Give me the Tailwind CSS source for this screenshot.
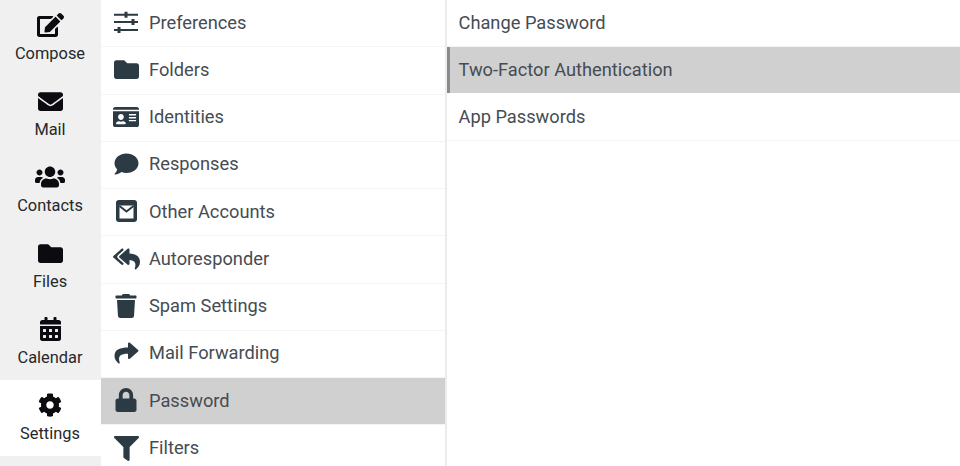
<!DOCTYPE html>
<html lang="en">
<head>
  <meta charset="UTF-8">
  <title>Settings</title>
  <script src="https://cdn.jsdelivr.net/npm/@tailwindcss/browser@4"></script>
</head>
<body class="bg-white h-[466px] overflow-hidden font-['Roboto',sans-serif]">
  <div class="flex h-[466px] overflow-hidden">

    <!-- App nav -->
    <nav class="w-[101px] shrink-0 bg-[#f0f0f0] text-[16.4px] text-[#26282b]">
      <a class="h-[76px] flex flex-col items-center pr-[1px]">
        <svg class="h-[24px] mt-[13px] fill-[#0b0b10]" viewBox="0 0 576 512"><path d="M402.6 83.2l90.2 90.2c3.8 3.8 3.8 10 0 13.8L274.4 405.6l-92.8 10.3c-12.4 1.4-22.9-9.1-21.5-21.5l10.3-92.8L388.8 83.2c3.8-3.8 10-3.8 13.8 0zm162-22.9l-48.8-48.8c-15.2-15.2-39.9-15.2-55.2 0l-35.4 35.4c-3.8 3.8-3.8 10 0 13.8l90.2 90.2c3.8 3.8 10 3.8 13.8 0l35.4-35.4c15.2-15.3 15.2-40 0-55.2zM384 346.2V448H64V128h229.8c3.2 0 6.2-1.3 8.5-3.5l40-40c7.6-7.6 2.2-20.5-8.5-20.5H48C21.5 64 0 85.5 0 112v352c0 26.5 21.5 48 48 48h352c26.5 0 48-21.5 48-48V306.2c0-10.7-12.9-16-20.5-8.5l-40 40c-2.2 2.3-3.5 5.3-3.5 8.5z"/></svg>
        <span class="mt-[5px] leading-[24px]">Compose</span>
      </a>
      <a class="h-[76px] flex flex-col items-center pr-[1px]">
        <svg class="h-[25px] mt-[13px] fill-[#0b0b10]" viewBox="0 0 512 512"><path d="M502.3 190.8c3.9-3.1 9.7-.2 9.7 4.7V400c0 26.5-21.5 48-48 48H48c-26.5 0-48-21.5-48-48V195.6c0-5 5.7-7.8 9.7-4.7 22.4 17.4 52.1 39.5 154.1 113.6 21.1 15.4 56.7 47.8 92.2 47.6 35.7.3 72-32.8 92.3-47.6 102-74.1 131.6-96.3 154-113.7zM256 320c23.2.4 56.6-29.2 73.4-41.4 132.7-96.3 142.8-104.7 173.4-128.7 5.8-4.5 9.2-11.5 9.2-18.9v-19c0-26.5-21.5-48-48-48H48C21.5 64 0 85.5 0 112v19c0 7.4 3.4 14.3 9.2 18.9 30.6 23.9 40.7 32.4 173.4 128.7 16.8 12.2 50.2 41.8 73.4 41.4z"/></svg>
        <span class="mt-[4px] leading-[24px]">Mail</span>
      </a>
      <a class="h-[76px] flex flex-col items-center pr-[1px]">
        <svg class="h-[24px] mt-[13px] fill-[#0b0b10]" viewBox="0 0 640 512"><path d="M96 224c35.3 0 64-28.7 64-64s-28.7-64-64-64-64 28.7-64 64 28.7 64 64 64zm448 0c35.3 0 64-28.7 64-64s-28.7-64-64-64-64 28.7-64 64 28.7 64 64 64zm32 32h-64c-17.6 0-33.5 7.1-45.1 18.6 40.3 22.1 68.9 62 75.1 109.4h66c17.7 0 32-14.3 32-32v-32c0-35.3-28.7-64-64-64zm-256 0c61.9 0 112-50.1 112-112S381.9 32 320 32 208 82.1 208 144s50.1 112 112 112zm76.8 32h-8.3c-20.8 10-43.9 16-68.5 16s-47.6-6-68.5-16h-8.3C179.6 288 128 339.6 128 403.2V432c0 26.5 21.5 48 48 48h288c26.5 0 48-21.5 48-48v-28.8c0-63.6-51.6-115.2-115.2-115.2zm-223.7-13.4C161.5 263.1 145.6 256 128 256H64c-35.3 0-64 28.7-64 64v32c0 17.7 14.3 32 32 32h65.9c6.3-47.4 34.9-87.3 75.2-109.4z"/></svg>
        <span class="mt-[5px] leading-[24px]">Contacts</span>
      </a>
      <a class="h-[76px] flex flex-col items-center pr-[1px]">
        <svg class="h-[25px] mt-[13px] fill-[#0b0b10]" viewBox="0 0 512 512"><path d="M464 128H272l-64-64H48C21.49 64 0 85.49 0 112v288c0 26.51 21.49 48 48 48h416c26.51 0 48-21.49 48-48V176c0-26.51-21.49-48-48-48z"/></svg>
        <span class="mt-[4px] leading-[24px]">Files</span>
      </a>
      <a class="h-[76px] flex flex-col items-center pr-[1px]">
        <svg class="h-[24px] mt-[13px] fill-[#0b0b10]" viewBox="0 0 448 512"><path d="M0 464c0 26.5 21.5 48 48 48h352c26.5 0 48-21.5 48-48V192H0v272zm320-196c0-6.6 5.4-12 12-12h40c6.6 0 12 5.4 12 12v40c0 6.6-5.4 12-12 12h-40c-6.6 0-12-5.4-12-12v-40zm0 128c0-6.6 5.4-12 12-12h40c6.6 0 12 5.4 12 12v40c0 6.6-5.4 12-12 12h-40c-6.6 0-12-5.4-12-12v-40zM192 268c0-6.6 5.4-12 12-12h40c6.6 0 12 5.4 12 12v40c0 6.6-5.4 12-12 12h-40c-6.6 0-12-5.4-12-12v-40zm0 128c0-6.6 5.4-12 12-12h40c6.6 0 12 5.4 12 12v40c0 6.6-5.4 12-12 12h-40c-6.6 0-12-5.4-12-12v-40zM64 268c0-6.6 5.4-12 12-12h40c6.6 0 12 5.4 12 12v40c0 6.6-5.4 12-12 12H76c-6.6 0-12-5.4-12-12v-40zm0 128c0-6.6 5.4-12 12-12h40c6.6 0 12 5.4 12 12v40c0 6.6-5.4 12-12 12H76c-6.6 0-12-5.4-12-12v-40zM400 64h-48V16c0-8.8-7.2-16-16-16h-32c-8.8 0-16 7.2-16 16v48H160V16c0-8.8-7.2-16-16-16h-32c-8.8 0-16 7.2-16 16v48H48C21.5 64 0 85.5 0 112v48h448v-48c0-26.5-21.5-48-48-48z"/></svg>
        <span class="mt-[5px] leading-[24px]">Calendar</span>
      </a>
      <a class="h-[76px] flex flex-col items-center pr-[1px] bg-white">
        <svg class="h-[24px] mt-[13px] fill-[#0b0b10]" viewBox="0 0 512 512"><path d="M487.4 315.7l-42.6-24.6c4.3-23.2 4.3-47 0-70.2l42.6-24.6c4.9-2.8 7.1-8.6 5.5-14-11.1-35.6-30-67.8-54.7-94.6-3.8-4.1-10-5.1-14.8-2.3L380.8 110c-17.9-15.4-38.5-27.3-60.8-35.1V25.8c0-5.6-3.9-10.5-9.4-11.7-36.7-8.2-74.3-7.8-109.2 0-5.5 1.2-9.4 6.1-9.4 11.7V75c-22.2 7.9-42.8 19.8-60.8 35.1L88.7 85.5c-4.9-2.8-11-1.9-14.8 2.3-24.7 26.7-43.6 58.9-54.7 94.6-1.7 5.4.6 11.2 5.5 14L67.3 221c-4.3 23.2-4.3 47 0 70.2l-42.6 24.6c-4.9 2.8-7.1 8.6-5.5 14 11.1 35.6 30 67.8 54.7 94.6 3.8 4.1 10 5.1 14.8 2.3l42.6-24.6c17.9 15.4 38.5 27.3 60.8 35.1v49.2c0 5.6 3.9 10.5 9.4 11.7 36.7 8.2 74.3 7.8 109.2 0 5.5-1.2 9.4-6.1 9.4-11.7v-49.2c22.2-7.9 42.8-19.8 60.8-35.1l42.6 24.6c4.9 2.8 11 1.9 14.8-2.3 24.7-26.7 43.6-58.9 54.7-94.6 1.5-5.5-.7-11.3-5.6-14.1zM256 336c-44.1 0-80-35.9-80-80s35.9-80 80-80 80 35.9 80 80-35.9 80-80 80z"/></svg>
        <span class="mt-[5px] leading-[24px]">Settings</span>
      </a>
    </nav>

    <!-- Settings sections -->
    <div class="w-[346px] shrink-0 border-r-2 border-[#e8edf0] text-[18.25px] text-[#454c53]">
      <a class="h-[47.25px] flex items-center border-b border-[#f4f4f4] pb-[1.5px] pl-[12px]">
        <svg class="w-[26px] h-[24px] mr-[10px] fill-[#2c3a44]" viewBox="0 0 26 24"><path d="M1 3.700h24v2H1zM1 11h24v2H1zM1 19h24v2H1zM11.500 1.700h3v6h-3zM18.500 9h3v6h-3zM4.500 17h3v6h-3z"/></svg>
        <span>Preferences</span>
      </a>
      <a class="h-[47.25px] flex items-center border-b border-[#f4f4f4] pb-[1.5px] pl-[13px]">
        <svg class="w-[25px] h-[25px] mr-[10px] fill-[#2c3a44]" viewBox="0 0 512 512"><path d="M464 128H272l-64-64H48C21.49 64 0 85.49 0 112v288c0 26.51 21.49 48 48 48h416c26.51 0 48-21.49 48-48V176c0-26.51-21.49-48-48-48z"/></svg>
        <span>Folders</span>
      </a>
      <a class="h-[47.25px] flex items-center border-b border-[#f4f4f4] pb-[1.5px] pl-[12px]">
        <svg class="w-[26px] h-[24px] mr-[10px] fill-[#2c3a44]" viewBox="0 0 576 512"><path d="M528 32H48C21.5 32 0 53.5 0 80v16h576V80c0-26.5-21.5-48-48-48zM0 432c0 26.5 21.5 48 48 48h480c26.5 0 48-21.5 48-48V128H0v304zm352-232c0-4.4 3.6-8 8-8h144c4.4 0 8 3.6 8 8v16c0 4.4-3.6 8-8 8H360c-4.4 0-8-3.6-8-8v-16zm0 64c0-4.4 3.6-8 8-8h144c4.4 0 8 3.6 8 8v16c0 4.4-3.6 8-8 8H360c-4.4 0-8-3.6-8-8v-16zm0 64c0-4.4 3.6-8 8-8h144c4.4 0 8 3.6 8 8v16c0 4.4-3.6 8-8 8H360c-4.4 0-8-3.6-8-8v-16zM176 192c35.3 0 64 28.7 64 64s-28.7 64-64 64-64-28.7-64-64 28.7-64 64-64zM67.1 396.2C75.5 370.5 99.6 352 128 352h8.2c12.3 5.1 25.7 8 39.8 8s27.6-2.9 39.8-8h8.2c28.4 0 52.5 18.5 60.9 44.2 3.2 9.9-5.2 19.8-15.6 19.8H82.7c-10.4 0-18.8-10-15.6-19.8z"/></svg>
        <span>Identities</span>
      </a>
      <a class="h-[47.25px] flex items-center border-b border-[#f4f4f4] pb-[1.5px] pl-[13px]">
        <svg class="w-[25px] h-[24px] mr-[10px] fill-[#2c3a44]" viewBox="0 0 512 512"><path d="M256 32C114.6 32 0 125.1 0 240c0 49.6 21.4 95 57 130.7C44.5 421.1 2.7 466 2.2 466.5c-2.2 2.3-2.8 5.7-1.5 8.7S4.8 480 8 480c66.3 0 116-31.8 140.6-51.4 32.7 12.3 69 19.4 107.4 19.400 141.400 0 256-93.100 256-208S397.400 32 256 32z"/></svg>
        <span>Responses</span>
      </a>
      <a class="h-[47.25px] flex items-center border-b border-[#f4f4f4] pb-[1.5px] pl-[12px]">
        <svg class="w-[26px] h-[22px] mr-[10px]" viewBox="0 0 26 22"><rect x="3" y="0" width="21" height="22" rx="3" fill="#2c3a44"/><rect x="6.500" y="5.500" width="14" height="13" fill="#fff"/><path d="M6.500 6l7 5.500 7-5.500" fill="none" stroke="#2c3a44" stroke-width="1.800"/></svg>
        <span>Other Accounts</span>
      </a>
      <a class="h-[47.25px] flex items-center border-b border-[#f4f4f4] pb-[1.5px] pl-[12px]">
        <svg class="w-[27px] h-[24px] mr-[9px] fill-[#2c3a44]" viewBox="0 0 576 512"><path d="M136.309 189.836L312.313 37.851C327.72 24.546 352 35.348 352 56.015v82.763c129.182 10.231 224 52.212 224 183.548 0 61.441-39.582 122.309-83.333 154.132-13.653 9.931-33.111-2.533-28.077-18.631 38.512-123.162-3.922-169.482-112.59-182.015v84.175c0 20.701-24.3 31.453-39.687 18.164L136.309 226.164c-11.071-9.561-11.086-26.753 0-36.328zm-128 36.328L184.313 378.15C199.7 391.439 224 380.636 224 359.985v-15.683l-108.606-93.804a55.96 55.96 0 0 1-.048-84.9L224 71.698V56.015c0-20.667-24.28-31.469-39.687-18.164L8.309 189.836c-11.086 9.575-11.071 26.767 0 36.328z"/></svg>
        <span>Autoresponder</span>
      </a>
      <a class="h-[47.25px] flex items-center border-b border-[#f4f4f4] pb-[1.5px] pl-[12px]">
        <svg class="w-[26px] h-[24px] mr-[10px] fill-[#2c3a44]" viewBox="0 0 448 512"><path d="M432 32H312l-9.4-18.7A24 24 0 0 0 281.1 0H166.8a23.72 23.72 0 0 0-21.4 13.3L136 32H16A16 16 0 0 0 0 48v32a16 16 0 0 0 16 16h416a16 16 0 0 0 16-16V48a16 16 0 0 0-16-16zM53.2 467a48 48 0 0 0 47.9 45h245.8a48 48 0 0 0 47.9-45L416 128H32z"/></svg>
        <span>Spam Settings</span>
      </a>
      <a class="h-[47.25px] flex items-center border-b border-[#f4f4f4] pb-[1.5px] pl-[13px]">
        <svg class="w-[25px] h-[24px] mr-[10px] fill-[#2c3a44]" viewBox="0 0 512 512"><path d="M503.691 189.836L327.687 37.851C312.281 24.546 288 35.347 288 56.015v80.053C127.371 137.907 0 170.1 0 322.326c0 61.441 39.581 122.309 83.333 154.132 13.653 9.931 33.111-2.533 28.077-18.631C66.066 312.814 132.917 274.316 288 272.085V360c0 20.7 24.3 31.453 39.687 18.164l176.004-152c11.071-9.562 11.086-26.753 0-36.328z"/></svg>
        <span>Mail Forwarding</span>
      </a>
      <a class="h-[47.25px] flex items-center border-b border-[#f4f4f4] pb-[1.5px] pl-[12px] bg-[#d0d0d0]">
        <svg class="w-[26px] h-[24px] mr-[10px] fill-[#2c3a44]" viewBox="0 0 448 512"><path d="M400 224h-24v-72C376 68.2 307.8 0 224 0S72 68.2 72 152v72H48c-26.5 0-48 21.5-48 48v192c0 26.5 21.5 48 48 48h352c26.5 0 48-21.500 48-48V272c0-26.5-21.5-48-48-48zm-104 0H152v-72c0-39.7 32.3-72 72-72s72 32.3 72 72v72z"/></svg>
        <span>Password</span>
      </a>
      <a class="h-[47.25px] flex items-center pb-[1.5px] pl-[13px]">
        <svg class="w-[25px] h-[25px] mr-[10px] fill-[#2c3a44]" viewBox="0 0 512 512"><path d="M487.976 0H24.028C2.71 0-8.047 25.866 7.058 40.971L192 225.941V432c0 7.831 3.821 15.17 10.237 19.662l80 55.98C298.02 518.69 320 507.493 320 487.98V225.941l184.947-184.97C520.021 25.896 509.338 0 487.976 0z"/></svg>
        <span>Filters</span>
      </a>
    </div>

    <!-- Password options -->
    <div class="flex-1 text-[18.25px] text-[#454c53]">
      <a class="h-[47px] flex items-center border-b border-[#f4f4f4] pb-[1.5px] pl-[11.500px]">Change Password</a>
      <a class="h-[46px] flex items-center border-l-[3px] border-l-[#8a8a8a] pb-[0.5px] pl-[8.500px] bg-[#d0d0d0]">Two-Factor Authentication</a>
      <a class="h-[48px] flex items-center border-b border-[#f4f4f4] pl-[11.500px]">App Passwords</a>
    </div>
  </div>
</body>
</html>
